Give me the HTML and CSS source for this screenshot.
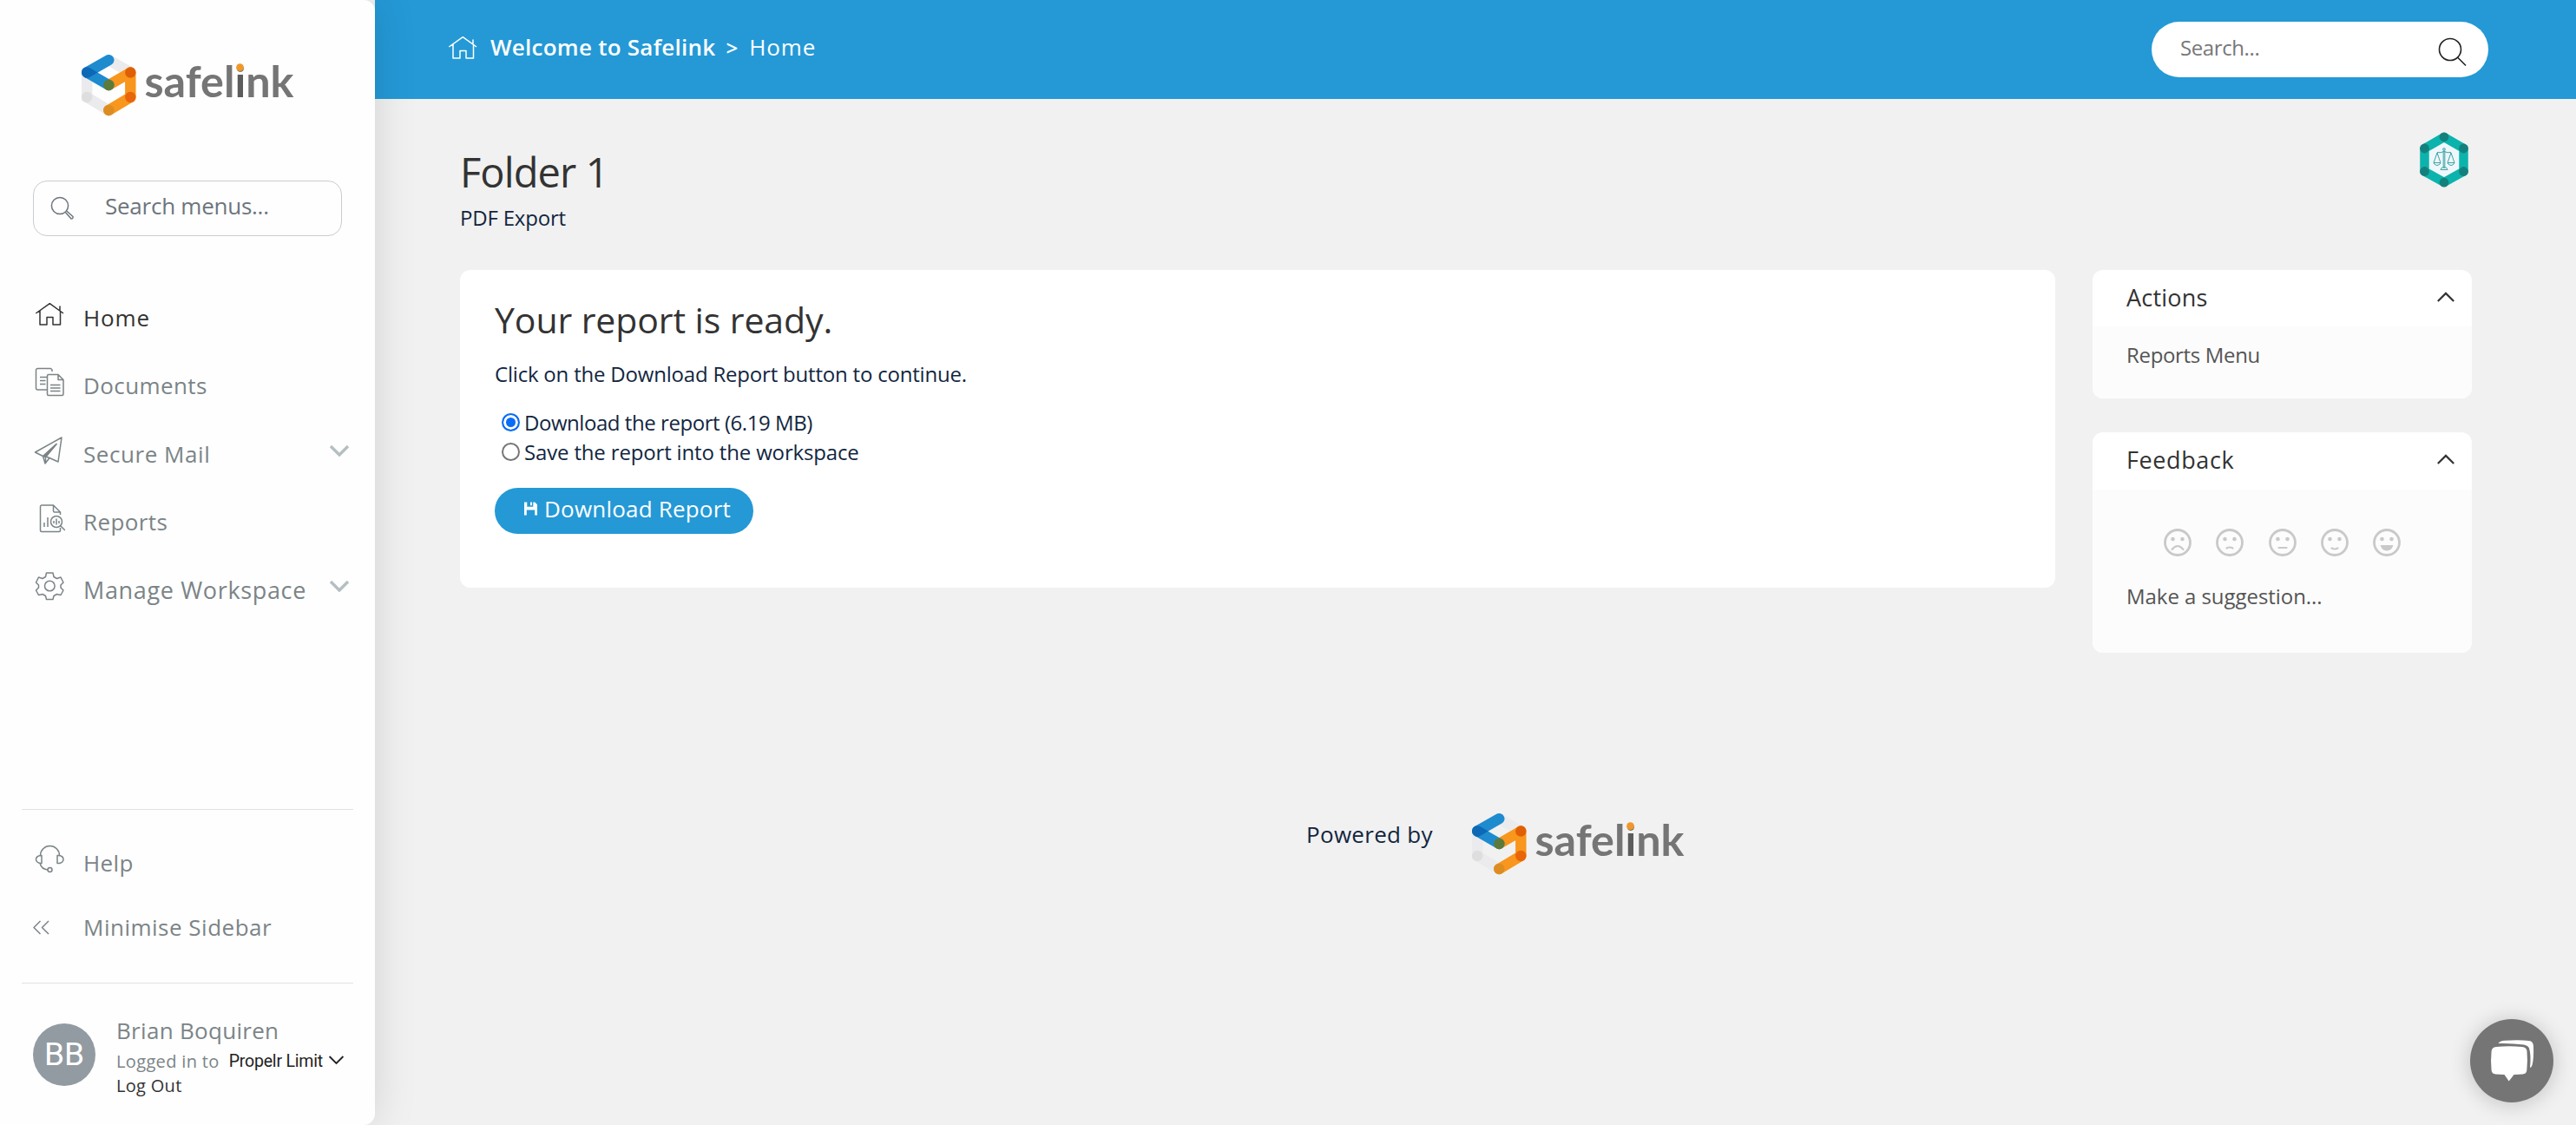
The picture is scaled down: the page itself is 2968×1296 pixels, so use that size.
FILE: index.html
```
<!DOCTYPE html>
<html lang="en">
<head>
    <meta charset="UTF-8">
    <meta name="viewport" content="width=device-width, initial-scale=1.0">
    <title>Safelink - PDF Export</title>
    <link rel="stylesheet" href="styles.css">
</head>
<body>
    <!-- Shared symbols -->
    <svg class="defs" width="0" height="0">
        <symbol id="mark" viewBox="0 0 64 74">
            <g fill="none" stroke-width="12.4" stroke-linecap="round">
                <path d="M31.3 6.2L56.3 20.5M6.2 20.5V49L31.3 64" stroke="#ebebed"/>
                <path d="M31.3 35L56.3 20.5V49L31.3 64" stroke="#f8961d" stroke-linejoin="round"/>
                <path d="M31.3 6.2L6.2 20.5L31.3 35" stroke="#1f8bcf" stroke-linejoin="round"/>
            </g>
            <circle cx="6.2" cy="49" r="6.2" fill="#dedede"/>
            <path d="M0 20.5a6.2 6.2 0 0 1 9.3-5.4l9.3 5.4-9.3 5.4A6.2 6.2 0 0 1 0 20.5z" fill="#0d68b5"/>
            <circle cx="31.3" cy="35" r="6.2" fill="#5d7a3a"/>
            <circle cx="56.3" cy="20.5" r="6.2" fill="#e05f06"/>
            <circle cx="56.3" cy="49" r="6.2" fill="#e8650a"/>
            <circle cx="31.3" cy="64" r="6.2" fill="#dc8d22"/>
        </symbol>
        <symbol id="house" viewBox="0 0 36 36">
            <path d="M2.3 17L18.3 5.7L34 17M7 14V30H15V21.5H22V30H30.5V14M30 13.5V8.5"/>
        </symbol>
        <symbol id="chevron" viewBox="0 0 24 14">
            <path d="M2 2L12 12L22 2"/>
        </symbol>
    </svg>

    <aside class="sidebar">
        <svg class="logo" viewBox="0 0 250 74">
            <use href="#mark" width="64" height="74"/>
            <text x="72.5" y="48.5" textLength="172" lengthAdjust="spacingAndGlyphs">safel<tspan>i</tspan>nk</text>
            <circle cx="182.5" cy="14.7" r="4.4"/>
        </svg>

        <div class="menu-search">
            <svg class="icon" viewBox="0 0 28 28">
                <circle cx="11" cy="11" r="9.6"/>
                <path d="M17.5 18.8L24 26Q26.5 26 26 23.5L19 17.3"/>
            </svg>
            <span>Search menus...</span>
        </div>

        <nav class="menu">
            <a class="menu-item active">
                <svg class="icon"><use href="#house"/></svg>
                <span>Home</span>
            </a>
            <a class="menu-item">
                <svg class="icon" viewBox="0 0 36 36">
                    <path d="M15 27H4.5a2 2 0 0 1-2-2V4.5a2 2 0 0 1 2-2H19.5L21 4V6M7 12.5H15M7 16.5H13.5M7 20.5H13.5"/>
                    <path d="M17 9.5H28L34 15.5V32a1.5 1.5 0 0 1-1.5 1.5H17a1.5 1.5 0 0 1-1.5-1.5V11a1.5 1.5 0 0 1 1.5-1.5zM28 9.5V15.5H34M19 21.5H30.5M19 25H30.5M19 28.5H30.5"/>
                </svg>
                <span>Documents</span>
            </a>
            <a class="menu-item mail">
                <svg class="icon" viewBox="0 0 36 36">
                    <path d="M1.5 20L32 3L28 31L18 26.5L13 33L10.5 24.5zM10.5 24.5L26 10.5L13.5 25.5V32.5M18 26.5L14 25"/>
                    <path d="M11 24.5L26 10.5L13.5 25.5z" fill="#7b8487"/>
                </svg>
                <span>Secure Mail</span>
                <svg class="chevron"><use href="#chevron"/></svg>
            </a>
            <a class="menu-item">
                <svg class="icon" viewBox="0 0 36 36">
                    <path d="M30.5 14V11L22.5 3H9A1.5 1.5 0 0 0 7.5 4.5V32A1.5 1.5 0 0 0 9 33.5H29A1.5 1.5 0 0 0 30.5 32V29M22.5 3V9.5A1.5 1.5 0 0 0 24 11H30.5M12 23V28M16 17V28"/>
                    <circle cx="26" cy="22" r="6.5"/>
                    <path d="M30.5 26.5L36 32M23 21V24M26 18.5V25.5M29 21V24"/>
                </svg>
                <span>Reports</span>
            </a>
            <a class="menu-item manage">
                <svg class="icon" viewBox="0 0 36 36">
                    <circle cx="18.3" cy="18" r="5.8"/>
                    <path d="M14.5 3H22L23 7.5L26.5 9.5L31 8L34 14L31 17V20L34 23L31 28.5L26.5 27.5L23 29.5L22 33.5H14.5L13.5 29.5L10 27.5L5.5 28.5L2.5 23L5.5 20V17L2.5 14L5.5 8L10 9.5L13.5 7.5z"/>
                </svg>
                <span>Manage Workspace</span>
                <svg class="chevron"><use href="#chevron"/></svg>
            </a>
        </nav>

        <div class="sidebar-tools">
            <a class="menu-item">
                <svg class="icon" viewBox="0 0 36 36">
                    <path d="M7.5 14.5V13.5A11 11 0 0 1 29.5 13.5V14.5M9 13.5H7.5Q2.5 14.5 2.5 18T7.5 22.5H9zM27 13.5H29.5Q34 14.5 34 18T29.5 22.5H27zM7 22.5Q9 29.5 16 30"/>
                    <circle cx="18.5" cy="30" r="2.5"/>
                </svg>
                <span>Help</span>
            </a>
            <a class="menu-item minimise">
                <svg class="icon" viewBox="0 0 36 36">
                    <path d="M8.5 11L1 18.5L8.5 26M18 11L10.5 18.5L18 26"/>
                </svg>
                <span>Minimise Sidebar</span>
            </a>
        </div>

        <div class="user">
            <div class="avatar">BB</div>
            <div class="user-info">
                <div class="user-name">Brian Boquiren</div>
                <div class="user-line">
                    <span>Logged in to</span>
                    <span class="company">Propelr Limit</span>
                    <svg class="chevron"><use href="#chevron"/></svg>
                </div>
                <a class="logout">Log Out</a>
            </div>
        </div>
    </aside>

    <div class="page">
        <header class="header">
            <svg class="icon"><use href="#house"/></svg>
            <span class="crumb-root">Welcome to Safelink</span>
            <span class="crumb-sep">&gt;</span>
            <span class="crumb">Home</span>
            <div class="search">
                <span>Search...</span>
                <svg viewBox="0 0 34 34">
                    <circle cx="14" cy="14" r="12.5"/>
                    <path d="M22.5 23L32 32.5"/>
                </svg>
            </div>
        </header>

        <div class="title-row">
            <div>
                <h1>Folder 1</h1>
                <p class="subtitle">PDF Export</p>
            </div>
            <svg class="badge" viewBox="0 0 56 64">
                <path d="M28 6L50.5 19V45.5L28 58L5.5 45.5V19z" fill="#eef7fa" stroke="#0cb3ac" stroke-width="10.5" stroke-linejoin="round"/>
                <g fill="#12817d">
                    <circle cx="28" cy="5.8" r="5.4"/>
                    <circle cx="50.5" cy="19" r="5.4"/>
                    <circle cx="50.5" cy="45.5" r="5.4"/>
                    <circle cx="28" cy="58.2" r="5.4"/>
                    <circle cx="5.5" cy="45.5" r="5.4"/>
                    <circle cx="5.5" cy="19" r="5.4"/>
                </g>
                <g fill="none" stroke="#3ba3a5" stroke-width="1">
                    <circle cx="28" cy="20" r="1.3"/>
                    <path d="M27.2 21.5V41H28.8V21.5M24 43.5H32L30.5 41H25.5zM20 23.5Q24 24.5 28 22.5Q32 24.5 36 23.5M20 24L16 35.5H24zM36 24L32 35.5H40zM16 36Q20 41 24 36M32 36Q36 41 40 36"/>
                </g>
            </svg>
        </div>

        <main class="content">
            <section class="card report">
                <h2>Your report is ready.</h2>
                <p class="intro">Click on the Download Report button to continue.</p>
                <label class="option option-download"><i class="radio checked"></i><span>Download the report (6.19 MB)</span></label>
                <label class="option option-save"><i class="radio"></i><span>Save the report into the workspace</span></label>
                <button type="button">
                    <svg viewBox="0 0 16 16"><path d="M0 0H3.5V5.5H11V0H13L16 3V16H13V9.5H3V16H0zM7.5 0H9.5V4H7.5z"/></svg>
                    <span>Download Report</span>
                </button>
            </section>

            <div class="side">
                <section class="card panel actions">
                    <div class="panel-head">
                        <span>Actions</span>
                        <svg class="chevron"><use href="#chevron"/></svg>
                    </div>
                    <div class="panel-body">Reports Menu</div>
                </section>

                <section class="card panel feedback">
                    <div class="panel-head">
                        <span>Feedback</span>
                        <svg class="chevron"><use href="#chevron"/></svg>
                    </div>
                    <div class="panel-body">
                        <div class="faces">
                            <svg viewBox="0 0 32 32"><circle class="ring" cx="16" cy="16" r="14.5"/><circle cx="10.5" cy="12" r="2.3"/><circle cx="21.5" cy="12" r="2.3"/><path class="mouth" d="M9.5 24Q16 16 22.5 24"/></svg>
                            <svg viewBox="0 0 32 32"><circle class="ring" cx="16" cy="16" r="14.5"/><circle cx="10.5" cy="12" r="2.3"/><circle cx="21.5" cy="12" r="2.3"/><path class="mouth" d="M12.5 22.5Q16 20.5 19.5 22.5"/></svg>
                            <svg viewBox="0 0 32 32"><circle class="ring" cx="16" cy="16" r="14.5"/><circle cx="10.5" cy="12" r="2.3"/><circle cx="21.5" cy="12" r="2.3"/><path class="mouth" d="M11.5 22H20.5"/></svg>
                            <svg viewBox="0 0 32 32"><circle class="ring" cx="16" cy="16" r="14.5"/><circle cx="10.5" cy="12" r="2.3"/><circle cx="21.5" cy="12" r="2.3"/><path class="mouth" d="M12.5 22.5Q16 24.5 19.5 22.5"/></svg>
                            <svg viewBox="0 0 32 32"><circle class="ring" cx="16" cy="16" r="14.5"/><circle cx="10.5" cy="12" r="2.3"/><circle cx="21.5" cy="12" r="2.3"/><path d="M8.5 19H23.5Q21.5 25.5 16 25.5T8.5 19z"/></svg>
                        </div>
                        <div class="suggestion">Make a suggestion...</div>
                    </div>
                </section>
            </div>
        </main>

        <footer class="footer">
            <span>Powered by</span>
            <svg class="logo" viewBox="0 0 250 74">
                <use href="#mark" width="64" height="74"/>
                <text x="72.5" y="48.5" textLength="172" lengthAdjust="spacingAndGlyphs">safel<tspan>i</tspan>nk</text>
                <circle cx="182.5" cy="14.7" r="4.4"/>
            </svg>
        </footer>
    </div>

    <div class="chat">
        <svg viewBox="0 0 96 96">
            <path d="M32.5 28Q34 25 40 24.8Q56 23.5 68 25Q72.5 25.5 73 31Q73.5 46 71.5 53Q71 55.5 69 56Q70.5 42 68 33.5Q67 30.5 62 29.5Q48 27.5 32.5 28z"/>
            <path d="M30 32Q45 30.5 60 32Q65 32.5 65.5 37Q66.5 48 65.3 59Q65 63 60.5 63.5L50.5 64L44.7 71.5L39.5 64L29.5 63.5Q25 63 24.6 59Q23.5 48 24.6 37Q25 32.5 30 32z"/>
        </svg>
    </div>
</body>
</html>
```

FILE: styles.css
```
* {
    margin: 0;
    padding: 0;
    box-sizing: border-box;
}

body {
    display: flex;
    height: 1296px;
    overflow: hidden;
    background: #f1f1f1;
    color: #12263f;
    font-family: "Open Sans", sans-serif;
    font-size: 24px;
    white-space: nowrap;
}

.defs {
    position: absolute;
}

.icon {
    width: 36px;
    height: 36px;
    flex: none;
    fill: none;
    stroke: currentColor;
    stroke-width: 1.5;
    stroke-linejoin: round;
}

.chevron {
    width: 24px;
    height: 14px;
    fill: none;
    stroke: currentColor;
    stroke-width: 2.4;
}

.logo {
    display: block;
    width: 250px;
    height: 74px;
}

.logo text {
    font-family: Lato, sans-serif;
    font-size: 50px;
    font-weight: 700;
    fill: #757575;
}

.logo tspan {
    fill: #5c5c5c;
}

.logo > circle {
    fill: #f0982a;
}

/* Sidebar */
.sidebar {
    display: flex;
    flex-direction: column;
    flex: none;
    position: relative;
    z-index: 1;
    width: 432px;
    padding-top: 63px;
    background: #fefefe;
    border-radius: 0 13px 13px 0;
    box-shadow: 0 0 50px rgba(0, 0, 0, 0.13);
    color: #7b8487;
    font-size: 26px;
}

.sidebar > .logo {
    margin-left: 94px;
}

.menu-search {
    display: flex;
    align-items: center;
    height: 64px;
    margin: 71px 38px 0;
    padding-left: 19px;
    border: 1px solid #c9cccf;
    border-radius: 16px;
    color: #6c757d;
    letter-spacing: -0.25px;
}

.menu-search .icon {
    width: 28px;
    height: 28px;
    margin-right: 35px;
}

.menu-search span {
    margin-bottom: 6px;
}

.menu {
    margin-top: 55px;
}

.menu-item {
    display: flex;
    align-items: center;
    height: 78.3px;
    padding-left: 39px;
    letter-spacing: 0.4px;
}

.menu-item .icon {
    margin: 0 21px 8px 0;
}

.menu-item.active {
    color: #333;
    letter-spacing: 0.9px;
}

.menu-item .chevron {
    margin: 0 29px 8px auto;
    color: #b5bfc1;
    stroke-width: 3.4;
}

.mail {
    letter-spacing: 0.55px;
}

.manage span {
    width: 256px;
    overflow: hidden;
    font-size: 27px;
    letter-spacing: 0.65px;
}

.sidebar-tools {
    height: 201px;
    margin: auto 25px 0;
    padding-top: 24px;
    border-top: 1px solid #dfe2e3;
    border-bottom: 1px solid #dfe2e3;
}

.sidebar-tools .menu-item {
    height: 74px;
    padding-left: 14px;
}

.sidebar-tools .minimise {
    padding-left: 13px;
    letter-spacing: 0.5px;
}

.minimise .icon {
    margin: 0 22px 0 0;
}

.user {
    display: flex;
    height: 163px;
    padding: 38px 0 0 38px;
}

.avatar {
    width: 72px;
    height: 72px;
    margin-top: 8px;
    border-radius: 50%;
    background: #929ba2;
    color: #fff;
    font-family: Roboto, sans-serif;
    font-size: 37px;
    line-height: 71px;
    text-align: center;
}

.user-info {
    margin-left: 24px;
}

.user-name {
    height: 37px;
    line-height: 33px;
    letter-spacing: 0.3px;
}

.user-line {
    display: flex;
    align-items: center;
    height: 28px;
    font-size: 20px;
    letter-spacing: 0.35px;
}

.company {
    width: 109px;
    margin: 0 5px 0 11px;
    overflow: hidden;
    color: #222;
    font-family: Roboto, sans-serif;
    font-size: 19.5px;
    letter-spacing: -0.2px;
}

.user-line .chevron {
    width: 19px;
    margin-bottom: 2px;
    color: #222;
}

.logout {
    display: block;
    color: #333;
    font-size: 20px;
    line-height: 29px;
    letter-spacing: 0.3px;
}

/* Page */
.page {
    flex: 1;
}

.header {
    display: flex;
    align-items: center;
    height: 114px;
    padding: 0 101px 0 83px;
    background: #2499d6;
    color: #fff;
    font-size: 26px;
}

.header .icon {
    margin-bottom: 5px;
}

.crumb-root {
    margin-left: 14px;
    font-weight: 600;
    letter-spacing: 0.25px;
}

.crumb-sep {
    margin: 0 13px 0 12px;
    font-size: 24px;
    font-weight: 600;
}

.crumb {
    letter-spacing: 0.9px;
}

.crumb-root,
.crumb-sep,
.crumb {
    margin-bottom: 6px;
}

.search {
    display: flex;
    align-items: center;
    justify-content: space-between;
    width: 388px;
    height: 64px;
    margin-left: auto;
    padding: 0 24px 0 33px;
    border-radius: 32px;
    background: #fff;
    color: #777;
    font-size: 24px;
    letter-spacing: -0.4px;
}

.search span {
    margin-bottom: 6px;
}

.search svg {
    width: 34px;
    height: 34px;
    margin-top: 6px;
    fill: none;
    stroke: #222;
    stroke-width: 1.6;
}

.title-row {
    display: flex;
    justify-content: space-between;
    height: 197px;
    padding: 38px 124px 0 98px;
}

h1 {
    margin-top: 14px;
    color: #333;
    font-size: 47px;
    font-weight: 400;
    line-height: 64px;
    letter-spacing: -0.9px;
}

.subtitle {
    margin-top: 4px;
    line-height: 33px;
    letter-spacing: -0.2px;
}

.badge {
    width: 56px;
    height: 64px;
    overflow: visible;
}

.content {
    display: flex;
    justify-content: space-between;
    align-items: flex-start;
    padding: 0 120px 0 98px;
}

.card {
    border-radius: 12px;
    background: #fff;
}

.report {
    width: 1838px;
    height: 366px;
    padding: 31px 40px;
}

h2 {
    color: #333;
    font-size: 41px;
    font-weight: 400;
    line-height: 52px;
    letter-spacing: -0.1px;
}

.intro {
    margin-top: 20px;
    line-height: 34px;
    letter-spacing: -0.2px;
}

.option {
    display: flex;
    align-items: center;
    height: 33.5px;
    padding-left: 8px;
}

.option-download {
    margin-top: 22px;
    letter-spacing: -0.45px;
}

.option-save {
    letter-spacing: -0.16px;
}

.radio {
    width: 21px;
    height: 21px;
    margin-right: 5px;
    border: 2px solid #767676;
    border-radius: 50%;
    background: #fff;
}

.radio.checked {
    border-color: #0b6cf5;
    background: #0b6cf5;
    box-shadow: inset 0 0 0 3px #fff;
}

button {
    display: flex;
    align-items: center;
    height: 53px;
    width: 298px;
    margin-top: 25px;
    padding: 0 0 5px 34px;
    border: none;
    border-radius: 27px;
    background: #2499d6;
    color: #fff;
    font-family: inherit;
    font-size: 26px;
    letter-spacing: 0.2px;
}

button svg {
    width: 15px;
    height: 16px;
    margin-right: 8px;
    fill: #fff;
}

.side {
    width: 437px;
}

.panel {
    overflow: hidden;
}

.panel-head {
    display: flex;
    align-items: center;
    justify-content: space-between;
    height: 65px;
    padding: 0 19px 3px 39px;
    color: #333;
    font-size: 27px;
    letter-spacing: 0.2px;
}

.panel-head .chevron {
    width: 22px;
    height: 13px;
    transform: rotate(180deg);
}

.panel-body {
    background: #fcfcfc;
    color: #555;
}

.actions .panel-body {
    height: 83px;
    padding: 16px 39px;
    letter-spacing: -0.33px;
}

.feedback {
    margin-top: 39px;
}

.feedback .panel-head {
    height: 66px;
    letter-spacing: 0.6px;
}

.feedback .panel-body {
    height: 188px;
    padding: 45px 0 0 39px;
}

.faces {
    display: flex;
    gap: 28.3px;
    padding-left: 43px;
}

.faces svg {
    width: 32px;
    height: 32px;
    fill: #c9c9c9;
}

.faces .ring {
    fill: none;
    stroke: #c9c9c9;
    stroke-width: 2.8;
}

.faces .mouth {
    fill: none;
    stroke: #c9c9c9;
    stroke-width: 2.2;
    stroke-linecap: round;
}

.suggestion {
    margin-top: 29px;
    line-height: 34px;
    letter-spacing: -0.05px;
}

.footer {
    display: flex;
    padding: 185px 0 0 1073px;
    font-size: 26px;
}

.footer span {
    margin: 6px 45px 0 0;
    letter-spacing: 0.3px;
}

/* Chat launcher floats over the page */
.chat {
    position: absolute;
    right: 26px;
    bottom: 26px;
    z-index: 2;
    width: 96px;
    height: 96px;
    border-radius: 50%;
    background: #757575;
    box-shadow: 0 2px 24px rgba(0, 0, 0, 0.2);
}

.chat svg {
    display: block;
    fill: #fff;
}
```
